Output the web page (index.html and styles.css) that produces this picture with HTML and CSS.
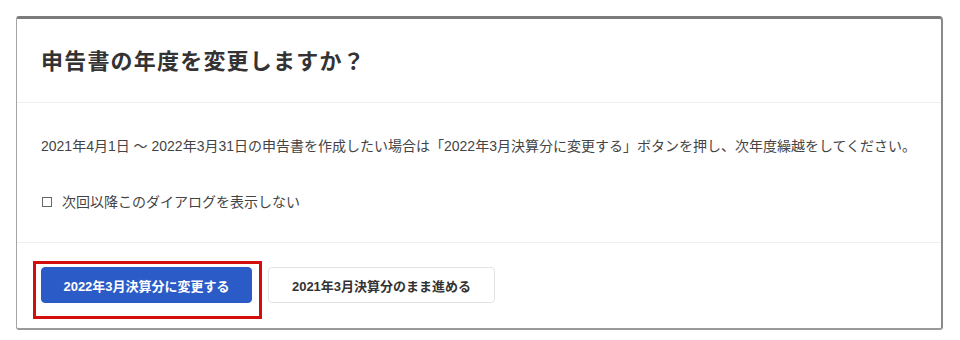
FILE: index.html
```html
<!DOCTYPE html>
<html lang="ja">
<head>
<meta charset="utf-8">
<title>申告書の年度を変更しますか？</title>
<link rel="stylesheet" href="styles.css">
</head>
<body>
<div class="dialog">
  <div class="dialog-header">
    <h1 class="dialog-title">申告書の年度を変更しますか？</h1>
  </div>
  <div class="dialog-body">
    <p class="message">2021年4月1日 ～ 2022年3月31日の申告書を作成したい場合は「2022年3月決算分に変更する」ボタンを押し、次年度繰越をしてください。</p>
    <label class="check"><span class="check-box"></span>次回以降このダイアログを表示しない</label>
  </div>
  <div class="dialog-footer">
    <div class="primary-wrap">
      <button class="btn btn-primary">2022年3月決算分に変更する</button>
      <span class="highlight"></span>
    </div>
    <button class="btn btn-secondary">2021年3月決算分のまま進める</button>
  </div>
</div>
</body>
</html>
```
FILE: styles.css
```css
html, body {
  margin: 0;
  background: #ffffff;
}
body {
  padding: 16px 0 0 16px;
  font-family: "Liberation Sans", "Noto Sans CJK JP", sans-serif;
  color: #333333;
}
.dialog {
  width: 927px;
  height: 314px;
  box-sizing: border-box;
  background: #ffffff;
  border-top: 3px solid #7b7b7b;
  border-left: 1px solid #a5a5a5;
  border-right: 2px solid #8a8a8a;
  border-bottom: 2px solid #9a9a9a;
  border-radius: 3px 4px 3px 3px;
  display: flex;
  flex-direction: column;
}
.dialog-header {
  height: 84px;
  box-sizing: border-box;
  padding: 0 24px;
  display: flex;
  align-items: center;
  border-bottom: 1px solid #efefef;
}
.dialog-title {
  margin: 0;
  font-size: 22px;
  letter-spacing: 1.2px;
  font-weight: bold;
  color: #333333;
  line-height: 30px;
  position: relative;
  top: 1px;
}
.dialog-body {
  padding: 33px 24px 0 24px;
  height: 140px;
  box-sizing: border-box;
  border-bottom: 1px solid #efefef;
  display: flex;
  flex-direction: column;
  gap: 36px;
}
.message {
  margin: 0;
  font-size: 14px;
  line-height: 20px;
  color: #444444;
}
.check {
  display: flex;
  align-items: center;
  font-size: 14px;
  line-height: 20px;
  color: #444444;
  padding-left: 1px;
}
.check-box {
  width: 8px;
  height: 8px;
  border: 1px solid #666666;
  margin-right: 10px;
  flex: none;
}
.dialog-footer {
  padding: 24px 24px 0 24px;
  display: flex;
  align-items: flex-start;
  gap: 16px;
}
.primary-wrap {
  position: relative;
  display: flex;
}
.btn {
  height: 36px;
  box-sizing: border-box;
  font-family: "Liberation Sans", "Noto Sans CJK JP", sans-serif;
  font-size: 13px;
  font-weight: bold;
  border-radius: 4px;
  cursor: pointer;
  padding: 0 16px;
  margin: 0;
}
.btn-primary {
  width: 211px;
  background: #2a5bc7;
  color: #ffffff;
  border: 1px solid #2a5bc7;
}
.btn-secondary {
  width: 227px;
  background: #ffffff;
  color: #333333;
  border: 1px solid #e3e3e3;
}
.highlight {
  position: absolute;
  left: -8px;
  top: -6px;
  width: 229px;
  height: 58px;
  box-sizing: border-box;
  border: 3px solid #d40d0d;
  pointer-events: none;
}
```
